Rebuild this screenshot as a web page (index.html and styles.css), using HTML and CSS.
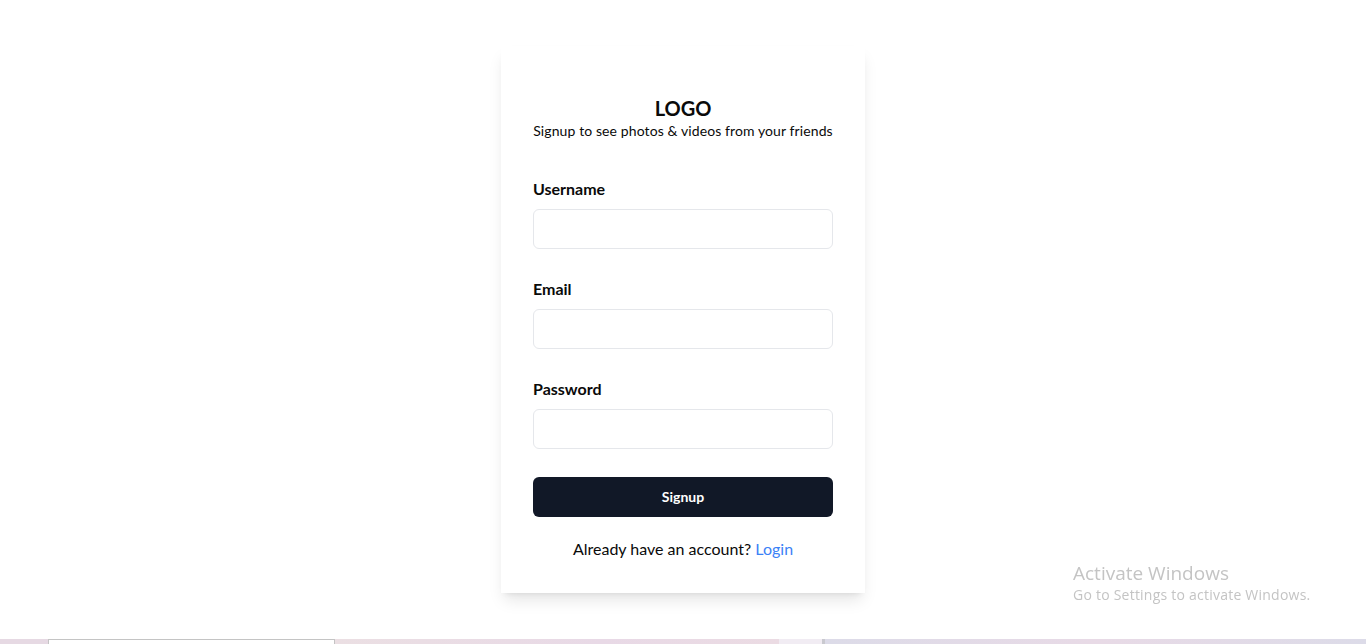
FILE: index.html
```html
<!DOCTYPE html>
<html lang="en">
<head>
<meta charset="utf-8">
<title>Signup</title>
<link rel="stylesheet" href="styles.css">
</head>
<body>
<div class="page">
  <main class="main">
    <form class="card">
      <div class="brand">
        <h1 class="logo">LOGO</h1>
        <p class="tagline">Signup to see photos &amp; videos from your friends</p>
      </div>
      <div class="fields">
        <div class="field">
          <label class="label" for="username">Username</label>
          <input class="input" id="username" type="text">
        </div>
        <div class="field">
          <label class="label" for="email">Email</label>
          <input class="input" id="email" type="email">
        </div>
        <div class="field">
          <label class="label" for="password">Password</label>
          <input class="input" id="password" type="password">
        </div>
      </div>
      <button class="btn" type="button">Signup</button>
      <p class="alt">Already have an account? <a class="link" href="#">Login</a></p>
    </form>
  </main>
  <div class="taskbar">
    <span class="tb tb-a"></span>
    <span class="tb tb-b"></span>
    <span class="tb tb-c"></span>
    <span class="tb tb-d"></span>
    <span class="tb tb-e"></span>
    <span class="tb tb-f"></span>
  </div>
  <div class="watermark">
    <div class="wm-title">Activate Windows</div>
    <div class="wm-sub">Go to Settings to activate Windows.</div>
  </div>
</div>
</body>
</html>
```

FILE: styles.css
```css
* { box-sizing: border-box; }
html, body { margin: 0; padding: 0; }
body {
  font-family: "Lato", "Open Sans", "Liberation Sans", sans-serif;
  color: #0a0a0a;
  background: #fff;
}
.page {
  height: 644px;
  display: flex;
  flex-direction: column;
  overflow: hidden;
}
.main {
  flex: 1;
  display: flex;
  justify-content: center;
  align-items: flex-start;
  padding-top: 46px;
}
.card {
  width: 364px;
  padding: 48px 32px 32px;
  background: #fff;
  box-shadow: 0 10px 15px -3px rgba(0,0,0,0.1), 0 4px 6px -4px rgba(0,0,0,0.1);
  display: flex;
  flex-direction: column;
}
.brand { text-align: center; }
.logo {
  margin: 0;
  font-size: 20px;
  line-height: 28px;
  font-weight: 700;
}
.tagline {
  margin: 0;
  font-size: 14px;
  line-height: 18px;
  letter-spacing: 0.1px;
}
.fields {
  margin-top: 37px;
  display: flex;
  flex-direction: column;
  gap: 28px;
}
.field {
  display: flex;
  flex-direction: column;
  gap: 8px;
}
.label {
  font-size: 16px;
  line-height: 24px;
  font-weight: 700;
}
.input {
  height: 40px;
  border: 1px solid #e5e7eb;
  border-radius: 6px;
  background: #fff;
  padding: 0 12px;
  font: inherit;
  outline: none;
}
.btn {
  margin-top: 28px;
  height: 40px;
  border: 0;
  border-radius: 6px;
  background: #111827;
  color: #fff;
  font-family: inherit;
  font-size: 14px;
  font-weight: 700;
  padding-bottom: 2px;
  cursor: pointer;
}
.alt {
  margin: 20px 0 0;
  text-align: center;
  font-size: 16px;
  line-height: 24px;
}
.link { color: #3b82f6; text-decoration: none; }
.taskbar {
  height: 5px;
  display: flex;
  flex-shrink: 0;
}
.tb { display: block; height: 100%; }
.tb-a { width: 48px; background: #e6d9e3; }
.tb-b { width: 287px; background: #fff; border: 1px solid #c4c4c4; border-bottom: 0; }
.tb-c { width: 444px; background: linear-gradient(90deg, #ebdfe3, #e8d9e6 60%, #ebdbe3); }
.tb-d { width: 43px; background: #f1ecf3; }
.tb-e { width: 3px; background: #c9c9cf; }
.tb-f { flex: 1; background: linear-gradient(90deg, #dcdbe8, #e8dae6 50%, #dcdbe8); }
.watermark {
  position: fixed;
  left: 1073px;
  top: 561px;
  color: #c4c4c4;
  font-family: "Open Sans", "Noto Sans", sans-serif;
  pointer-events: none;
}
.wm-title { font-size: 19px; line-height: 24px; }
.wm-sub { font-size: 14px; line-height: 20px; letter-spacing: 0.23px; }
```
